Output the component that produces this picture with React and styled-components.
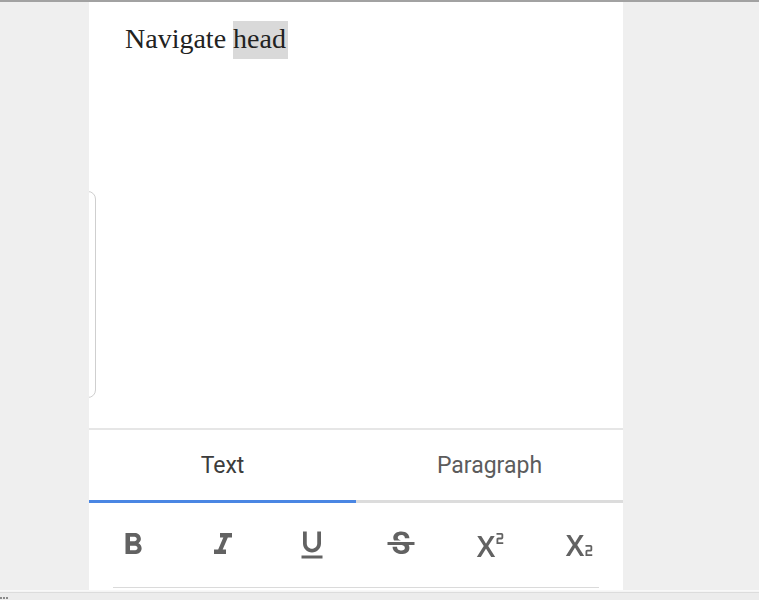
import React, { useState } from "react";
import styled, { createGlobalStyle } from "styled-components";
import {
  MdFormatBold,
  MdFormatItalic,
  MdFormatUnderlined,
  MdStrikethroughS,
} from "react-icons/md";

const Global = createGlobalStyle`
  html, body { margin: 0; padding: 0; background: #efefef; }
  * { box-sizing: border-box; }
`;

const Page = styled.div`
  height: 600px;
  display: flex;
  flex-direction: column;
  overflow: hidden;
  background: #efefef;
`;

const TopRule = styled.div`
  height: 2px;
  flex: none;
  background: #a2a2a2;
`;

const Main = styled.div`
  flex: 1;
  display: flex;
  min-height: 0;
`;

const Gutter = styled.div`
  width: ${(p) => (p.$w ? `${p.$w}px` : "auto")};
  flex: ${(p) => (p.$w ? "none" : "1")};
  background: #efefef;
`;

const Panel = styled.div`
  width: 534px;
  flex: none;
  position: relative;
  overflow: hidden;
  background: #fff;
  display: flex;
  flex-direction: column;
`;

const Handle = styled.div`
  position: absolute;
  left: -10px;
  top: 189px;
  width: 17px;
  height: 207px;
  border: 1px solid #cfcfcf;
  border-radius: 8px;
`;

const Editor = styled.div`
  flex: 1;
  padding: 19px 36px 0 36px;
`;

const Line = styled.p`
  margin: 0;
  font-family: "Liberation Serif", "Times New Roman", serif;
  font-size: 28px;
  line-height: 36px;
  color: #222;
`;

const Mark = styled.span`
  background: #d9d9d9;
  padding: 2px 2px 5px 0;
`;

const Tabs = styled.div`
  flex: none;
  display: flex;
  border-top: 2px solid #e6e6e6;
`;

const Tab = styled.button`
  flex: 1;
  height: 73px;
  border: 0;
  border-bottom: 3px solid ${(p) => (p.$active ? "#4a86e3" : "#dcdcdc")};
  background: #fff;
  padding: 0;
  font-family: Roboto, "Noto Sans", sans-serif;
  font-size: 23px;
  color: ${(p) => (p.$active ? "#3c3c3c" : "#5c5c5c")};
  cursor: pointer;
`;

const Toolbar = styled.div`
  flex: none;
  height: 84px;
  display: grid;
  grid-template-columns: repeat(6, 1fr);
  align-items: center;
  justify-items: center;
`;

const ToolButton = styled.button`
  border: 0;
  background: transparent;
  padding: 0;
  width: 36px;
  height: 36px;
  display: flex;
  align-items: center;
  justify-content: center;
  color: #626262;
  margin-top: ${(p) => p.$dy || 0}px;
  margin-left: ${(p) => p.$dx || 0}px;
  cursor: pointer;
`;

const PanelFoot = styled.div`
  flex: none;
  height: 3px;
  margin: 0 24px;
  border-top: 1px solid #dadada;
`;

const BottomStrip = styled.div`
  height: 10px;
  flex: none;
  background: #ececec;
  border-top: 1px solid #f8f8f8;
  box-shadow: inset 0 1px 0 #f4f4f4, inset 0 2px 0 #dcdcdc;
  display: flex;
  align-items: flex-end;
`;

const Grip = styled.div`
  width: 8px;
  height: 2px;
  margin-bottom: 1px;
  border-top: 2px dotted #8a8a8a;
`;

const SuperscriptIcon = ({ size = 36 }) => (
  <svg width={size} height={size} viewBox="0 0 24 24" fill="currentColor">
    <path d="M19 4h3.3c.66 0 1.2.54 1.2 1.2v1.85c0 .66-.54 1.2-1.2 1.2h-2.1v1.85h3.3v1.2H19V8.25c0-.66.54-1.2 1.2-1.2h2.1V5.2H19z" />
    <path d="M5.88 20h2.66l3.4-5.42h.12l3.4 5.42h2.66l-4.65-7.27L17.81 6h-2.68l-3.07 4.99h-.12L8.85 6H6.19l4.32 6.73L5.88 20z" />
  </svg>
);

const SubscriptIcon = ({ size = 36 }) => (
  <svg width={size} height={size} viewBox="0 0 24 24" fill="currentColor">
    <path d="M19 10.7h3.3c.66 0 1.2.54 1.2 1.2v1.85c0 .66-.54 1.2-1.2 1.2h-2.1v1.85h3.3v1.2H19v-3.05c0-.66.54-1.2 1.2-1.2h2.1V11.9H19z" />
    <path d="M5.88 18h2.66l3.4-5.42h.12l3.4 5.42h2.66l-4.65-7.27L17.81 4h-2.68l-3.07 4.99h-.12L8.85 4H6.19l4.32 6.73L5.88 18z" />
  </svg>
);

const tools = [
  { Icon: MdFormatBold, label: "Bold", dx: -2 },
  { Icon: MdFormatItalic, label: "Italic" },
  { Icon: MdFormatUnderlined, label: "Underline" },
  { Icon: MdStrikethroughS, label: "Strikethrough" },
  { Icon: SuperscriptIcon, label: "Superscript", dy: -1, dx: -7 },
  { Icon: SubscriptIcon, label: "Subscript", dy: 3, dx: -7 },
];

export default function App() {
  const [tab, setTab] = useState("text");
  return (
    <>
      <Global />
      <Page>
        <TopRule />
        <Main>
          <Gutter $w={89} />
          <Panel>
            <Handle />
            <Editor>
              <Line>
                Navigate <Mark>head</Mark>
              </Line>
            </Editor>
            <Tabs>
              <Tab $active={tab === "text"} onClick={() => setTab("text")}>
                Text
              </Tab>
              <Tab
                $active={tab === "paragraph"}
                onClick={() => setTab("paragraph")}
              >
                Paragraph
              </Tab>
            </Tabs>
            <Toolbar>
              {tools.map(({ Icon, label, dy, dx }) => (
                <ToolButton key={label} aria-label={label} $dy={dy} $dx={dx}>
                  <Icon size={36} />
                </ToolButton>
              ))}
            </Toolbar>
            <PanelFoot />
          </Panel>
          <Gutter />
        </Main>
        <BottomStrip>
          <Grip />
        </BottomStrip>
      </Page>
    </>
  );
}
